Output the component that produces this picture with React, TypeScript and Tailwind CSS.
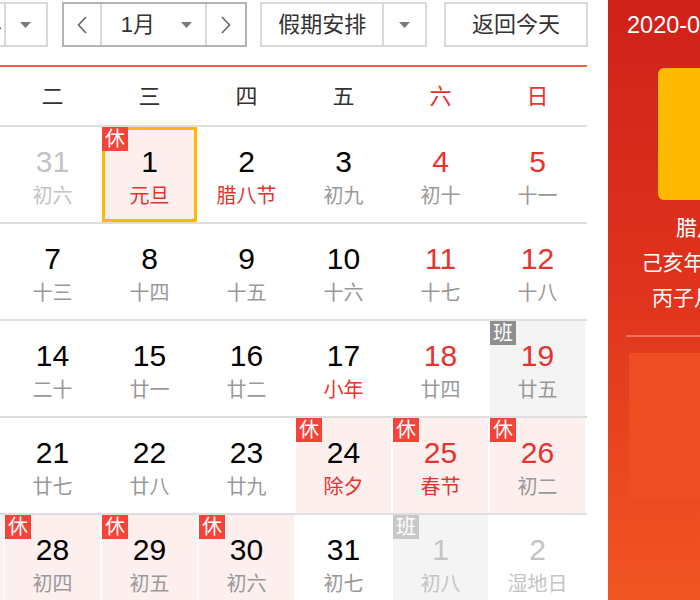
import React from 'react';

type Day = {
  n: number;
  lunar: string;
  other?: boolean;
  weekend?: boolean;
  fest?: boolean;
  tag?: '休' | '班';
  today?: boolean;
};

const weeks: Day[][] = [
  [
    { n: 30, lunar: '初五', other: true },
    { n: 31, lunar: '初六', other: true },
    { n: 1, lunar: '元旦', fest: true, tag: '休', today: true },
    { n: 2, lunar: '腊八节', fest: true },
    { n: 3, lunar: '初九' },
    { n: 4, lunar: '初十', weekend: true },
    { n: 5, lunar: '十一', weekend: true },
  ],
  [
    { n: 6, lunar: '十二' },
    { n: 7, lunar: '十三' },
    { n: 8, lunar: '十四' },
    { n: 9, lunar: '十五' },
    { n: 10, lunar: '十六' },
    { n: 11, lunar: '十七', weekend: true },
    { n: 12, lunar: '十八', weekend: true },
  ],
  [
    { n: 13, lunar: '十九' },
    { n: 14, lunar: '二十' },
    { n: 15, lunar: '廿一' },
    { n: 16, lunar: '廿二' },
    { n: 17, lunar: '小年', fest: true },
    { n: 18, lunar: '廿四', weekend: true },
    { n: 19, lunar: '廿五', weekend: true, tag: '班' },
  ],
  [
    { n: 20, lunar: '廿六' },
    { n: 21, lunar: '廿七' },
    { n: 22, lunar: '廿八' },
    { n: 23, lunar: '廿九' },
    { n: 24, lunar: '除夕', fest: true, tag: '休' },
    { n: 25, lunar: '春节', fest: true, weekend: true, tag: '休' },
    { n: 26, lunar: '初二', weekend: true, tag: '休' },
  ],
  [
    { n: 27, lunar: '初三', tag: '休' },
    { n: 28, lunar: '初四', tag: '休' },
    { n: 29, lunar: '初五', tag: '休' },
    { n: 30, lunar: '初六', tag: '休' },
    { n: 31, lunar: '初七' },
    { n: 1, lunar: '初八', other: true, tag: '班' },
    { n: 2, lunar: '湿地日', other: true },
  ],
];

const weekdays = ['一', '二', '三', '四', '五', '六', '日'];

function Caret() {
  return (
    <svg width="11" height="6" viewBox="0 0 11 6">
      <path d="M0 0h11L5.5 6z" fill="#7a7a7a" />
    </svg>
  );
}

function Chevron({ dir }: { dir: 'l' | 'r' }) {
  return (
    <svg width="10" height="18" viewBox="0 0 10 18">
      <polyline
        points={dir === 'l' ? '9,1 1.5,9 9,17' : '1,1 8.5,9 1,17'}
        fill="none"
        stroke="#666"
        strokeWidth="1.6"
      />
    </svg>
  );
}

function Cell({ d }: { d: Day }) {
  let bg = 'bg-white';
  if (d.tag === '休') bg = 'bg-[#fdefee]';
  if (d.tag === '班') bg = 'bg-[#f4f4f4]';
  if (d.today) bg = 'bg-[#fdefee]';

  let num = 'text-black';
  if (d.weekend) num = 'text-[#e8322e]';
  if (d.other) num = 'text-[#c4c4c4]';

  let lun = 'text-[#999]';
  if (d.fest) lun = 'text-[#e8322e]';
  if (d.other) lun = 'text-[#c4c4c4]';

  return (
    <div
      className={`relative w-[95px] h-[95px] flex flex-col items-center ${bg} ${
        d.today ? 'border-[3px] border-[#ffb900]' : ''
      }`}
    >
      {d.tag && (
        <span
          className={`absolute ${d.today ? '-left-[3px] -top-[3px]' : 'left-0 top-0'} w-[26px] h-[24px] flex items-center justify-center text-white text-[20px] leading-[24px] ${
            d.tag === '休' ? 'bg-[#f5433a]' : d.other ? 'bg-[#c8c8c8]' : 'bg-[#8f8f8f]'
          }`}
        >
          {d.tag}
        </span>
      )}
      <span className={`${d.today ? 'mt-[17px]' : 'mt-[20px]'} text-[30px] leading-[30px] ${num}`}>{d.n}</span>
      <span className={`mt-[9px] text-[20px] leading-[20px] ${lun}`}>{d.lunar}</span>
    </div>
  );
}

export default function App() {
  return (
    <div
      className="relative w-[700px] h-[600px] overflow-hidden bg-white"
      style={{ fontFamily: '"Liberation Sans", "Noto Sans CJK SC", sans-serif' }}
    >
      <div className="flex">
        {/* calendar */}
        <div className="w-[680px] -ml-[92px] shrink-0">
          <div className="flex items-start h-[65px] pt-[2px] text-[22px] text-[#333]">
            <div className="flex h-[45px] w-[140px] border-2 border-[#d9d9d9]">
              <div className="flex-1 flex items-center justify-end pr-[2px] border-r-2 border-[#d9d9d9]">2020年</div>
              <div className="w-[40px] flex items-center justify-center">
                <Caret />
              </div>
            </div>
            <div className="flex h-[45px] w-[186px] ml-[14px] border-2 border-[#b4b4b4]">
              <div className="w-[38px] flex items-center justify-center border-r-2 border-[#d9d9d9]">
                <Chevron dir="l" />
              </div>
              <div className="flex-1 flex items-center justify-between pl-[19px] pr-[13px] border-r-2 border-[#d9d9d9]">
                <span>1月</span>
                <Caret />
              </div>
              <div className="w-[38px] flex items-center justify-center">
                <Chevron dir="r" />
              </div>
            </div>
            <div className="flex h-[45px] w-[167px] ml-[13px] border-2 border-[#d9d9d9]">
              <div className="flex-1 flex items-center justify-center border-r-2 border-[#d9d9d9]">假期安排</div>
              <div className="w-[41px] flex items-center justify-center">
                <Caret />
              </div>
            </div>
            <div className="h-[45px] w-[144px] ml-[17px] border-2 border-[#d9d9d9] flex items-center justify-center">
              返回今天
            </div>
          </div>
          <div className="border-t-2 border-[#ff5b4f] w-[679px]">
            <div className="flex gap-[2px] h-[58px] items-center text-[22px]">
              {weekdays.map((w, i) => (
                <div
                  key={w}
                  className={`w-[95px] text-center ${i >= 5 ? 'text-[#e8322e]' : 'text-[#333]'}`}
                >
                  {w}
                </div>
              ))}
            </div>
            {weeks.map((row, ri) => (
              <div key={ri} className="flex gap-[2px] border-t-2 border-[#dedede]">
                {row.map((d, ci) => (
                  <Cell key={ci} d={d} />
                ))}
              </div>
            ))}
          </div>
        </div>

        {/* side panel */}
        <div className="ml-[20px] w-[220px] h-[600px] shrink-0 flex flex-col items-center text-white bg-gradient-to-b from-[#d0201a] via-[#e0341d] to-[#f25523]">
          <div className="self-start pl-[19px] mt-[11px] text-[23.5px] leading-[28px] whitespace-nowrap">2020-01-01 星期三</div>
          <div className="mt-[29px] w-[120px] h-[132px] rounded-[6px] bg-[#ffb900] flex items-center justify-center text-[80px] leading-none">
            1
          </div>
          <div className="mt-[10px] text-[21px] leading-[35px] text-center whitespace-nowrap">
            <div>腊月初七</div>
            <div>己亥年 【猪年】</div>
            <div>丙子月 丁亥日</div>
          </div>
          <div className="mt-[20px] w-[184px] h-[2px] bg-white/30" />
          <div className="mt-[16px] w-[178px] h-[148px] bg-[#ee4c23]" />
        </div>
      </div>
    </div>
  );
}
